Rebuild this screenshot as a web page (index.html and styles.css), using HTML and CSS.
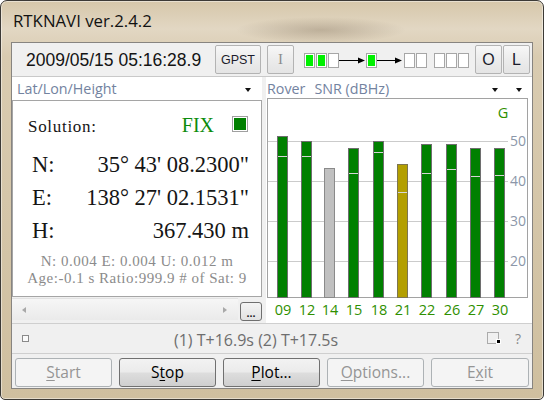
FILE: index.html
```html
<!DOCTYPE html>
<html lang="en">
<head>
<meta charset="utf-8">
<title>RTKNAVI</title>
<link rel="stylesheet" href="styles.css">
</head>
<body>
<div class="window">
  <div class="titlebar">RTKNAVI ver.2.4.2</div>
  <div class="client">
    <div class="toolbar">
      <div class="time">2009/05/15 05:16:28.9</div>
      <div class="tbtn gpst">GPST</div>
      <div class="tbtn ibtn">I</div>
      <svg class="ind" width="166" height="17" viewBox="0 0 166 17">
        <g fill="#fff" stroke="#a6a6a6">
          <rect x="0.5" y="2.5" width="10" height="14"/>
          <rect x="12.5" y="2.5" width="10" height="14"/>
          <rect x="24.5" y="2.5" width="10" height="14"/>
          <rect x="62.5" y="2.5" width="10" height="14"/>
          <rect x="100.5" y="2.5" width="10" height="14"/>
          <rect x="112.5" y="2.5" width="10" height="14"/>
          <rect x="130.5" y="2.5" width="10" height="14"/>
          <rect x="142.5" y="2.5" width="10" height="14"/>
          <rect x="154.5" y="2.5" width="10" height="14"/>
        </g>
        <g fill="#00f000">
          <rect x="2" y="4" width="7" height="11"/>
          <rect x="14" y="4" width="7" height="11"/>
          <rect x="64" y="4" width="7" height="11"/>
        </g>
        <path d="M35 9.5H55M73 9.5H92" stroke="#000"/>
        <path d="M54 6.5L61 9.5L54 12.5ZM91 6.5L98 9.5L91 12.5Z" fill="#000"/>
      </svg>
      <div class="tbtn obtn">O</div>
      <div class="tbtn lbtn">L</div>
    </div>

    <div class="main">
      <div class="leftcol">
        <div class="head lhead"><span>Lat/Lon/Height</span><i class="tri"></i></div>
        <div class="solpanel">
          <div class="solrow">
            <span class="sollabel">Solution:</span>
            <span class="fix">FIX</span>
            <span class="fixbox"><span class="fixfill"></span></span>
          </div>
          <div class="coords">
            <div class="coord"><span>N:</span><span>35° 43' 08.2300"</span></div>
            <div class="coord"><span>E:</span><span>138° 27' 02.1531"</span></div>
            <div class="coord"><span>H:</span><span>367.430 m</span></div>
          </div>
          <div class="info first">N: 0.004 E: 0.004 U: 0.012 m</div>
          <div class="info">Age:-0.1 s Ratio:999.9 # of Sat: 9</div>
        </div>
        <div class="scrollrow">
          <div class="hscroll"><i class="arr-l"></i><i class="arr-r"></i></div>
          <div class="dots">...</div>
        </div>
      </div>

      <div class="rightcol">
        <div class="head rhead"><span>Rover</span><span class="snr">SNR (dBHz)</span><i class="tri tri1"></i><i class="tri tri2"></i></div>
        <div class="chart">
          <svg width="266" height="225" viewBox="0 0 266 225">
            <rect x="1.5" y="0.5" width="260" height="199" fill="#fff" stroke="#a2a2a2"/>
            <path d="M2 43.5H242M2 83.5H242M2 123.5H242M2 163.5H242" stroke="#cbcbcb"/>
            <text class="axis" x="244" y="48">50</text>
            <text class="axis" x="244" y="88">40</text>
            <text class="axis" x="244" y="128">30</text>
            <text class="axis" x="244" y="168">20</text>
            <text class="glabel" x="237" y="20">G</text>
            <g stroke="#6e6e6e">
              <rect x="11.5" y="38.5" width="10" height="161" fill="#008000"/>
              <rect x="35.5" y="43.5" width="10" height="156" fill="#008000"/>
              <rect x="58.5" y="70.5" width="10" height="129" fill="#c0c0c0" stroke="#8a8a8a"/>
              <rect x="82.5" y="50.5" width="10" height="149" fill="#008000"/>
              <rect x="107.5" y="43.5" width="10" height="156" fill="#008000"/>
              <rect x="131.5" y="66.5" width="10" height="133" fill="#b39f00" stroke="#7d7550"/>
              <rect x="155.5" y="46.5" width="10" height="153" fill="#008000"/>
              <rect x="180.5" y="46.5" width="10" height="153" fill="#008000"/>
              <rect x="204.5" y="50.5" width="10" height="149" fill="#008000"/>
              <rect x="228.5" y="50.5" width="10" height="149" fill="#008000"/>
            </g>
            <path d="M12 58.5H21M36 58.5H45M83 75.5H92M108 54.5H117M132 94.5H141M156 75.5H165M181 71.5H190M205 78.5H214M229 77.5H238" stroke="#d6d6d6"/>
            <g class="prn">
              <text x="17" y="216.5">09</text>
              <text x="41" y="216.5">12</text>
              <text x="64" y="216.5">14</text>
              <text x="88" y="216.5">15</text>
              <text x="113" y="216.5">18</text>
              <text x="137" y="216.5">21</text>
              <text x="161" y="216.5">22</text>
              <text x="186" y="216.5">26</text>
              <text x="210" y="216.5">27</text>
              <text x="234" y="216.5">30</text>
            </g>
          </svg>
        </div>
      </div>
    </div>

    <div class="status">
      <span class="chk"></span>
      <span class="stext">(1) T+16.9s (2) T+17.5s</span>
      <svg class="grip" width="15" height="13" viewBox="0 0 15 13">
        <rect x="0.5" y="0.5" width="11" height="11" fill="none" stroke="#666" stroke-dasharray="1 1"/>
        <rect x="9.5" y="7.5" width="4" height="4" fill="#000" stroke="#fff"/>
      </svg>
      <span class="help">?</span>
    </div>

    <div class="buttons">
      <div class="btn disabled"><u>S</u>tart</div>
      <div class="btn">S<u>t</u>op</div>
      <div class="btn"><u>P</u>lot...</div>
      <div class="btn disabled"><u>O</u>ptions...</div>
      <div class="btn disabled last">E<u>x</u>it</div>
    </div>
  </div>
</div>
</body>
</html>
```

FILE: styles.css
```css
* { box-sizing: border-box; margin: 0; padding: 0; }
html, body { width: 544px; height: 400px; overflow: hidden; }
body { font-family: "Open Sans", sans-serif; background: #ffffff; }

.window {
  width: 544px;
  height: 400px;
  border: 1px solid #3c3a36;
  border-radius: 7px 7px 5px 5px;
  padding: 0 10px;
  overflow: hidden;
  background:
    radial-gradient(ellipse 85px 13px at 320px 29px, rgba(105, 85, 60, 0.30), rgba(105, 85, 60, 0) 100%),
    linear-gradient(180deg, #d6c7aa 0%, #e2d7c3 7%, #d9cbb0 14%, #cfbf9f 100%);
  box-shadow: inset 0 0 0 1px rgba(255, 255, 255, 0.45);
}

.titlebar {
  height: 41px;
  padding: 10px 0 0 2px;
  font-size: 16.8px;
  line-height: 20px;
  color: #121212;
}

.client {
  width: 522px;
  height: 347px;
  border: 1px solid #878480;
  background: #f0f0f0;
  display: flex;
  flex-direction: column;
}

/* toolbar */
.toolbar {
  height: 34px;
  flex: none;
  display: flex;
  align-items: center;
  padding-left: 14px;
  border-bottom: 1px solid #c9c9c9;
}
.time {
  width: 189px;
  align-self: flex-start;
  margin-top: 1px;
  line-height: 33px;
  font-family: "Liberation Sans", sans-serif;
  font-size: 17.5px;
  color: #141414;
  white-space: nowrap;
}
.tbtn {
  height: 29px;
  display: flex;
  align-items: center;
  justify-content: center;
  border: 1px solid #b3b3b3;
  border-radius: 2px;
  background: linear-gradient(180deg, #f7f7f7 0%, #ececec 50%, #e4e4e4 100%);
  color: #1c1c2c;
}
.gpst { width: 46px; font-family: "Liberation Sans", sans-serif; font-size: 12.5px; }
.ibtn { width: 27px; margin-left: 6px; font-family: "Liberation Serif", serif; font-size: 15px; color: #8c8c8c; }
.ind { margin-left: 10px; flex: none; }
.obtn { width: 27px; margin-left: 5px; font-family: "Liberation Sans", sans-serif; font-size: 16px; }
.lbtn { width: 27px; margin-left: 1px; font-family: "Liberation Sans", sans-serif; font-size: 16px; }

/* main area */
.main { height: 246px; flex: none; display: flex; }
.leftcol { width: 250px; display: flex; flex-direction: column; }
.rightcol { width: 266px; margin-left: 4px; display: flex; flex-direction: column; background: #fff; }

.head {
  background: #fff;
  display: flex;
  align-items: flex-start;
  font-size: 14.3px;
  color: #73839f;
  white-space: nowrap;
}
.lhead { height: 23px; padding: 2px 0 0 5px; line-height: 20px; }
.rhead { height: 21px; padding: 2px 0 0 1px; line-height: 19px; }
.snr { margin-left: 9px; }
.tri {
  width: 0; height: 0;
  border-left: 3.5px solid transparent;
  border-right: 3.5px solid transparent;
  border-top: 4px solid #111;
}
.lhead .tri { margin: 9px 11px 0 auto; }
.rhead .tri1 { margin: 9px 0 0 auto; }
.rhead .tri2 { margin: 9px 10px 0 18px; }

/* solution panel */
.solpanel {
  height: 197px;
  flex: none;
  border: 1px solid #a5a5a5;
  background: #fff;
  padding-top: 6px;
  font-family: "Liberation Serif", serif;
  color: #151515;
}
.solrow {
  height: 37px;
  display: flex;
  align-items: baseline;
  line-height: 36px;
  padding: 0 13px 0 15px;
}
.sollabel { font-size: 17px; letter-spacing: 0.7px; }
.fix { margin-left: auto; font-size: 20px; color: #0c8c0c; }
.fixbox {
  margin-left: 18px;
  width: 16px;
  height: 16px;
  border: 1px solid #a0a0a0;
  padding: 1px;
  background: #fff;
}
.fixfill { display: block; width: 12px; height: 12px; background: #008000; }
.coords { margin-top: 4px; }
.coord {
  display: flex;
  justify-content: space-between;
  padding: 0 12px 0 19px;
  font-size: 22.5px;
  line-height: 33px;
  white-space: nowrap;
}
.info {
  text-align: center;
  font-size: 15px;
  line-height: 17px;
  letter-spacing: 0.5px;
  color: #8b8b8b;
  white-space: nowrap;
}
.info.first { margin-top: 6px; }

/* scroll row */
.scrollrow { height: 26px; flex: none; display: flex; align-items: flex-start; }
.hscroll {
  width: 226px;
  height: 22px;
  margin-top: 1px;
  display: flex;
  align-items: center;
  padding: 0 11px 0 10px;
  background: linear-gradient(180deg, #f6f6f6 0%, #eaeaea 100%);
  border-top: 1px solid #e2e2e2;
}
.arr-l, .arr-r { width: 0; height: 0; border-top: 3.5px solid transparent; border-bottom: 3.5px solid transparent; }
.arr-l { border-right: 4px solid #a8a8a8; }
.arr-r { border-left: 4px solid #a8a8a8; margin-left: auto; }
.dots {
  width: 22px;
  height: 19px;
  margin: 5px 0 0 2px;
  border: 1px solid #6f6f6f;
  border-radius: 3px;
  background: linear-gradient(180deg, #f4f4f4 0%, #e2e2e2 100%);
  font-family: "Liberation Sans", sans-serif;
  font-weight: bold;
  font-size: 11px;
  line-height: 20px;
  text-align: center;
  color: #222;
}

.chart { height: 225px; }
.chart svg { display: block; }
.axis { font-family: "Open Sans", sans-serif; font-size: 14px; fill: #8c97a9; }
.glabel { font-family: "Open Sans", sans-serif; font-size: 14.5px; fill: #2f9000; text-anchor: middle; }
.prn text { font-family: "Open Sans", sans-serif; font-size: 14.5px; fill: #2f9000; text-anchor: middle; }

/* status */
.status {
  height: 31px;
  flex: none;
  display: flex;
  align-items: center;
  border-top: 1px solid #cfcfcf;
  border-bottom: 1px solid #cfcfcf;
}
.chk { width: 7px; height: 7px; margin-left: 10px; border: 1px solid #8a8a8a; background: #fafafa; }
.stext { margin: 3px 0 0 145px; font-size: 16px; color: #6e6e6e; white-space: nowrap; }
.grip { margin-left: auto; flex: none; }
.help { margin: 0 11px 0 13px; font-size: 14px; color: #8a8a8a; }

/* buttons */
.buttons { height: 34px; flex: none; display: flex; gap: 7px; padding: 4px 0 0 3px; }
.btn {
  width: 97px;
  height: 29px;
  border: 1px solid #707070;
  border-radius: 3px;
  background: linear-gradient(180deg, #f2f2f2 0%, #ebebeb 48%, #dddddd 52%, #cfcfcf 100%);
  font-size: 15.5px;
  line-height: 27px;
  text-align: center;
  color: #000;
}
.btn.disabled { border-color: #adb2b5; background: #f4f4f4; color: #959595; }
.btn.last { width: 98px; }
.btn u { text-underline-offset: 2px; }
```
